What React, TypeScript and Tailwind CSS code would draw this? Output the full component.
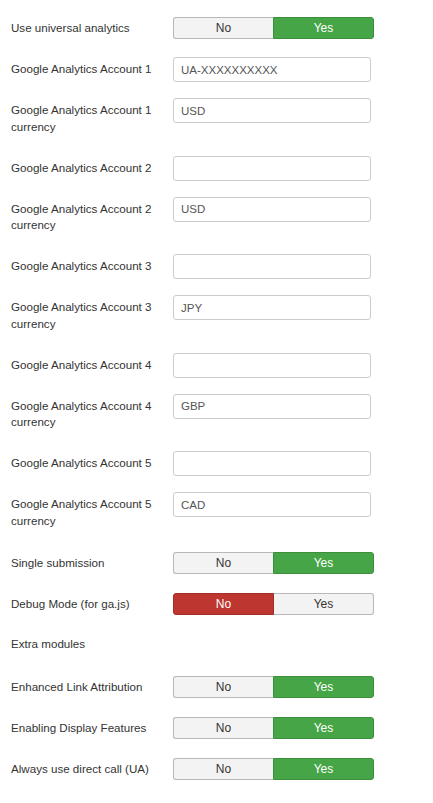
import React from 'react';

type Row =
  | { kind: 'toggle'; label: string; value: boolean }
  | { kind: 'input'; label: string; value: string }
  | { kind: 'label'; label: string };

const ROWS: Row[] = [
  { kind: 'toggle', label: 'Use universal analytics', value: true },
  { kind: 'input', label: 'Google Analytics Account 1', value: 'UA-XXXXXXXXXX' },
  { kind: 'input', label: 'Google Analytics Account 1 currency', value: 'USD' },
  { kind: 'input', label: 'Google Analytics Account 2', value: '' },
  { kind: 'input', label: 'Google Analytics Account 2 currency', value: 'USD' },
  { kind: 'input', label: 'Google Analytics Account 3', value: '' },
  { kind: 'input', label: 'Google Analytics Account 3 currency', value: 'JPY' },
  { kind: 'input', label: 'Google Analytics Account 4', value: '' },
  { kind: 'input', label: 'Google Analytics Account 4 currency', value: 'GBP' },
  { kind: 'input', label: 'Google Analytics Account 5', value: '' },
  { kind: 'input', label: 'Google Analytics Account 5 currency', value: 'CAD' },
  { kind: 'toggle', label: 'Single submission', value: true },
  { kind: 'toggle', label: 'Debug Mode (for ga.js)', value: false },
  { kind: 'label', label: 'Extra modules' },
  { kind: 'toggle', label: 'Enhanced Link Attribution', value: true },
  { kind: 'toggle', label: 'Enabling Display Features', value: true },
  { kind: 'toggle', label: 'Always use direct call (UA)', value: true },
];

const Toggle: React.FC<{ value: boolean }> = ({ value }) => (
  <div className="mt-[2.5px] flex h-[22px] w-[201px] text-[12px] leading-none">
    <span
      className={`flex flex-1 items-center justify-center rounded-l-[3px] border ${
        value ? 'border-[#b8b8b8] border-r-0 bg-[#f3f3f3] text-[#333]' : 'border-[#a52d27] bg-[#bd362f] text-white'
      }`}
    >
      No
    </span>
    <span
      className={`flex flex-1 items-center justify-center rounded-r-[3px] border ${
        value ? 'border-[#3b8f3b] bg-[#46a546] text-white' : 'border-[#b8b8b8] border-l-0 bg-[#f3f3f3] text-[#333]'
      }`}
    >
      Yes
    </span>
  </div>
);

const App: React.FC = () => {
  return (
    <div className="min-h-screen bg-white pl-[11px] pt-[14.5px] font-['Liberation_Sans',Arial,sans-serif] text-[11.6px] text-[#333]">
      {ROWS.map((row, i) => (
        <div key={i} className={`flex items-start ${i === 0 ? 'mb-[17.5px]' : 'mb-[16px]'}`}>
          <label
            className={`mr-[12px] w-[150px] shrink-0 leading-[16.5px] ${
              row.kind === 'toggle' ? 'pt-[5px] pb-[3.5px]' : row.kind === 'label' ? 'pt-[4px] pb-[5.5px]' : 'pt-[4px] pb-[4.5px]'
            }`}
          >
            {row.label}
          </label>
          {row.kind === 'toggle' && (
            <div className="h-[25px]">
              <Toggle value={row.value} />
            </div>
          )}
          {row.kind === 'input' && (
            <input
              readOnly
              value={row.value}
              className="h-[25px] w-[198px] rounded-[3px] border border-[#cccccc] px-[7px] text-[11.5px] text-[#555] outline-none"
            />
          )}
        </div>
      ))}
    </div>
  );
};

export default App;
